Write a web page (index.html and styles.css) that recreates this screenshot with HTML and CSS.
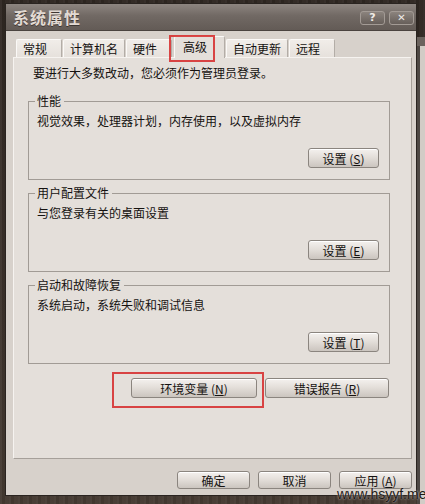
FILE: index.html
```html
<!DOCTYPE html>
<html lang="zh-CN">
<head>
<meta charset="utf-8">
<title>系统属性</title>
<link rel="stylesheet" href="styles.css">
</head>
<body>
<div class="desktop">
  <div class="window">
    <div class="titlebar">
      <span class="title">系统属性</span>
      <div class="title-buttons">
        <span class="tbtn">?</span>
        <span class="tbtn tbtn-close">✕</span>
      </div>
    </div>
    <div class="body">
      <div class="tabs">
        <span class="tab">常规</span>
        <span class="tab">计算机名</span>
        <span class="tab">硬件</span>
        <span class="tab tab-active">高级</span>
        <span class="tab">自动更新</span>
        <span class="tab">远程</span>
      </div>
      <div class="panel">
        <p class="intro">要进行大多数改动，您必须作为管理员登录。</p>
        <div class="group">
          <span class="legend">性能</span>
          <p class="desc">视觉效果，处理器计划，内存使用，以及虚拟内存</p>
          <div class="group-actions"><button class="btn btn-set">设置 (<u>S</u>)</button></div>
        </div>
        <div class="group">
          <span class="legend">用户配置文件</span>
          <p class="desc">与您登录有关的桌面设置</p>
          <div class="group-actions"><button class="btn btn-set">设置 (<u>E</u>)</button></div>
        </div>
        <div class="group">
          <span class="legend">启动和故障恢复</span>
          <p class="desc">系统启动，系统失败和调试信息</p>
          <div class="group-actions"><button class="btn btn-set">设置 (<u>T</u>)</button></div>
        </div>
        <div class="extra-actions">
          <button class="btn btn-env">环境变量 (<u>N</u>)</button>
          <button class="btn btn-err">错误报告 (<u>R</u>)</button>
        </div>
      </div>
      <div class="footer">
        <button class="btn btn-foot">确定</button>
        <button class="btn btn-foot">取消</button>
        <button class="btn btn-foot">应用 (<u>A</u>)</button>
      </div>
    </div>
  </div>
  <div class="behind"></div>
  <div class="mark mark-tab"></div>
  <div class="mark mark-env"></div>
  <div class="watermark">www.hsyyf.me</div>
</div>
</body>
</html>
```
FILE: styles.css
```css
* { box-sizing: border-box; }
html, body {
  margin: 0;
  padding: 0;
  width: 425px;
  height: 504px;
  overflow: hidden;
}
body {
  font-family: "Noto Sans CJK SC", "Noto Sans", sans-serif;
  font-size: 12px;
  color: #151210;
  background: #3a3029;
}
.desktop {
  position: relative;
  width: 425px;
  height: 504px;
  padding: 3px 0 0 5px;
  background:
    repeating-linear-gradient(90deg, rgba(255,255,255,0.04) 0 2px, rgba(0,0,0,0.06) 2px 5px, rgba(255,255,255,0.02) 5px 9px),
    linear-gradient(180deg, #2f2722, #453a32);
}
.window {
  width: 412px;
  height: 493px;
  border: 1px solid #2a2420;
  background: #d7d1cb;
  display: flex;
  flex-direction: column;
}
.titlebar {
  height: 27px;
  flex: none;
  display: flex;
  align-items: center;
  justify-content: space-between;
  padding: 0 2px 0 7px;
  background: linear-gradient(180deg, #8d8580 0%, #716964 45%, #635b56 100%);
  border-bottom: 1px solid #4a433f;
}
.title {
  font-size: 16px;
  font-weight: bold;
  letter-spacing: 1px;
  color: #e2dad3;
  text-shadow: 0 1px 0 #3d3632;
  line-height: 20px;
}
.title-buttons {
  display: flex;
  gap: 4px;
  margin-top: 2px;
}
.tbtn {
  width: 25px;
  height: 14px;
  border: 1px solid #a39b95;
  border-radius: 3px;
  background: linear-gradient(180deg, #8b837d, #675f5a);
  color: #f0ebe6;
  font-family: "DejaVu Sans", sans-serif;
  font-weight: bold;
  font-size: 11px;
  line-height: 12px;
  text-align: center;
}
.tbtn-close { font-size: 10px; }
.body {
  flex: 1;
  display: flex;
  flex-direction: column;
  padding: 8px 4px 0 7px;
}
.tabs {
  display: flex;
  align-items: flex-end;
  height: 18px;
  padding-left: 3px;
  position: relative;
  z-index: 1;
}
.tab {
  height: 18px;
  min-width: 46px;
  padding: 0 6px;
  line-height: 17px;
  background: linear-gradient(180deg, #f1ede9, #e6e1dc);
  border: 1px solid #b3ada7;
  border-top-color: #fbf9f7;
  border-left-color: #fbf9f7;
  border-bottom: none;
  border-radius: 2px 2px 0 0;
  margin-right: 1px;
  flex: none;
}
.tab-active {
  height: 22px;
  min-width: 51px;
  padding-left: 8px;
  margin-left: 1px;
  margin-right: 1px;
  line-height: 19px;
  background: #e4dfda;
  margin-bottom: -1px;
}
.panel {
  height: 402px;
  flex: none;
  background: #e4dfda;
  border: 1px solid #a6a09a;
  border-top-color: #f6f3f0;
  border-left-color: #f6f3f0;
  padding: 7px 21px 0 14px;
}
.intro {
  margin: 0 0 0 5px;
  line-height: 16px;
}
.group {
  margin-top: 20px;
  height: 79px;
  border: 1px solid #a19b95;
  padding: 0 10px 0 8px;
}
.group + .group { margin-top: 13px; }
.legend {
  display: table;
  margin: -8px 0 0 -2px;
  padding: 0 3px 0 2px;
  background: #e4dfda;
  line-height: 14px;
}
.desc {
  margin: 5px 0 0;
  line-height: 16px;
}
.group-actions {
  display: flex;
  justify-content: flex-end;
  margin-top: 19px;
}
.btn {
  font-family: "Noto Sans CJK SC", "Noto Sans", sans-serif;
  font-size: 12px;
  color: #151210;
  height: 20px;
  padding: 0;
  line-height: 17px;
  border: 1px solid #8b857f;
  border-radius: 3px;
  background: linear-gradient(180deg, #f4f1ee 0%, #e4dfda 45%, #cbc5bf 100%);
  box-shadow: inset 0 1px 0 #fff;
}
.btn u { text-underline-offset: 1px; }
.btn-set { width: 71px; }
.extra-actions {
  display: flex;
  justify-content: flex-end;
  gap: 8px;
  margin-top: 14px;
  margin-right: 1px;
}
.btn-env { width: 126px; }
.btn-err { width: 124px; }
.footer {
  display: flex;
  justify-content: flex-end;
  gap: 8px;
  margin-top: 12px;
}
.btn-foot { width: 73px; height: 18px; line-height: 15px; }
.behind {
  position: absolute;
  left: 417px;
  top: 37px;
  width: 10px;
  height: 470px;
  background: linear-gradient(90deg, #4d4743 0 3px, #d2ccc6 3px);
  border-top: 9px solid #6b635e;
}
.mark {
  position: absolute;
  z-index: 2;
  border: 2px solid rgba(214, 40, 40, 0.85);
}
.mark-tab { left: 169px; top: 35px; width: 46px; height: 27px; }
.mark-env { left: 112px; top: 372px; width: 152px; height: 36px; }
.watermark {
  position: absolute;
  z-index: 3;
  left: 337px;
  top: 486px;
  font-family: "Liberation Sans", Arial, sans-serif;
  font-size: 14px;
  line-height: 16px;
  color: #1e1a17;
  text-shadow: 0 0 2px #e8e2dc;
}
```
